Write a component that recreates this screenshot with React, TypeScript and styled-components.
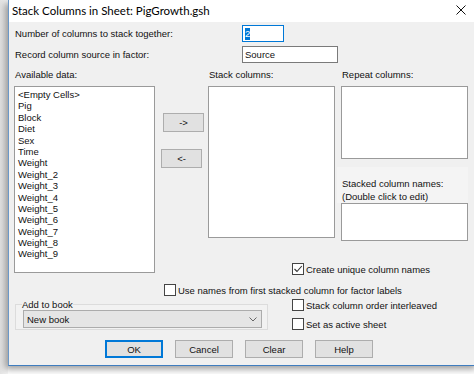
import React from "react";
import styled, { createGlobalStyle } from "styled-components";

const Global = createGlobalStyle`
  html, body { margin: 0; padding: 0; background: #ffffff; overflow: hidden; }
  body { width: 474px; height: 374px; font-family: "Liberation Sans", Arial, sans-serif; }
  #root { width: 474px; height: 374px; overflow: hidden; }
`;

const Page = styled.div`
  width: 474px;
  height: 374px;
  background: linear-gradient(to right, #e4e4e4 0px, #f6f6f6 8px, #ffffff 8px);
  overflow: hidden;
`;

const Frame = styled.div`
  margin-left: 8px;
  width: 470px;
  height: 365px;
  border-left: 1px solid #6b98c8;
  border-bottom: 1px solid #3f7dbf;
  box-shadow: -3px 3px 7px rgba(0, 0, 0, 0.4);
  display: flex;
  flex-direction: column;
  background: #f0f0f0;
`;

const TitleBar = styled.div`
  height: 22px;
  flex: none;
  background: #ffffff;
  display: flex;
  align-items: center;
  justify-content: space-between;
  padding-left: 3px;
`;

const Title = styled.span`
  font-family: Lato, "Noto Sans", sans-serif;
  font-size: 11.5px;
  color: #000;
  margin-top: -2px;
`;

const Close = styled.span`
  width: 20px;
  height: 20px;
  margin-right: 8px;
  margin-top: -2px;
  display: flex;
  align-items: center;
  justify-content: center;
`;

const Body = styled.div`
  flex: 1;
  padding: 3px 0 0 5px;
  display: flex;
  flex-direction: column;
  font-size: 9.5px;
  color: #111;
`;

const FieldRow = styled.div<{ $mt?: number }>`
  display: flex;
  align-items: center;
  height: 17px;
  margin-top: ${(p) => p.$mt ?? 0}px;
`;

const FieldLabel = styled.span`
  width: 227px;
  padding-left: 1px;
`;

const TextInput = styled.div<{ $w: number; $focus?: boolean }>`
  width: ${(p) => p.$w}px;
  height: 17px;
  box-sizing: border-box;
  background: #fff;
  border: 1px solid ${(p) => (p.$focus ? "#0078d7" : "#7a7a7a")};
  display: flex;
  align-items: center;
  padding-left: 2px;
`;

const Sel = styled.span`
  background: #0078d7;
  color: #fff;
  line-height: 12px;
`;

const Main = styled.div`
  display: flex;
  align-items: flex-start;
  margin-top: 6px;
`;

const Col = styled.div<{ $w: number }>`
  width: ${(p) => p.$w}px;
  display: flex;
  flex-direction: column;
`;

const Header = styled.div`
  height: 12px;
  line-height: 12px;
  padding-left: 1px;
  margin-bottom: 5px;
  white-space: nowrap;
`;

const ListBox = styled.div<{ $h: number }>`
  height: ${(p) => p.$h}px;
  box-sizing: border-box;
  background: #fff;
  border: 1px solid #9a9a9a;
  padding: 2px 3px;
`;

const Item = styled.div`
  line-height: 11.4px;
  height: 11.4px;
  white-space: nowrap;
`;

const ButtonCol = styled.div`
  width: 53px;
  display: flex;
  flex-direction: column;
  padding-top: 44px;
`;

const Button = styled.div<{ $w: number; $h?: number; $ml?: number; $mt?: number; $def?: boolean }>`
  width: ${(p) => p.$w}px;
  height: ${(p) => p.$h ?? 19}px;
  margin-left: ${(p) => p.$ml ?? 0}px;
  margin-top: ${(p) => p.$mt ?? 0}px;
  box-sizing: border-box;
  background: #e1e1e1;
  border: 1px solid ${(p) => (p.$def ? "#0078d7" : "#adadad")};
  box-shadow: ${(p) => (p.$def ? "inset 0 0 0 1px #0078d7" : "none")};
  display: flex;
  align-items: center;
  justify-content: center;
  font-size: 9.5px;
`;

const RightArea = styled.div`
  display: flex;
  flex-direction: column;
`;

const RightTop = styled.div`
  display: flex;
  gap: 6px;
`;

const NamesPanel = styled.div`
  margin-top: 8px;
  margin-left: -4px;
  padding: 10px 0 0 5px;
  background: #f4f4f4;
  line-height: 13px;
  height: 26px;
`;

const CheckRow = styled.div<{ $mt?: number; $ml?: number }>`
  display: flex;
  align-items: center;
  gap: 2px;
  margin-top: ${(p) => p.$mt ?? 0}px;
  margin-left: ${(p) => p.$ml ?? 0}px;
  height: 12px;
  white-space: nowrap;
`;

const Box = styled.span`
  width: 12px;
  height: 12px;
  box-sizing: border-box;
  background: #fff;
  border: 1px solid #444;
  display: flex;
  align-items: center;
  justify-content: center;
  flex: none;
`;

const Bottom = styled.div`
  display: flex;
  align-items: flex-start;
  margin-top: 3px;
`;

const Group = styled.fieldset`
  margin: 0 0 0 1px;
  padding: 0 5px 1px 7px;
  width: 253px;
  height: 31px;
  box-sizing: border-box;
  border: 1px solid #dcdcdc;
  background: #f2f2f2;
`;

const Legend = styled.legend`
  padding: 0;
  margin-left: -1px;
  font-size: 9.5px;
  line-height: 11px;
`;

const Select = styled.div`
  height: 18px;
  width: 239px;
  box-sizing: border-box;
  background: #e5e5e5;
  border: 1px solid #acacac;
  display: flex;
  align-items: center;
  justify-content: space-between;
  padding: 0 4px 0 3px;
`;

const RightChecks = styled.div`
  margin-left: 24px;
  display: flex;
  flex-direction: column;
  gap: 7px;
`;

const ButtonRow = styled.div`
  display: flex;
  gap: 12px;
  margin-top: 10px;
  margin-left: 91px;
`;

const Check = ({ checked }: { checked?: boolean }) => (
  <Box>
    {checked && (
      <svg width="10" height="10" viewBox="0 0 10 10">
        <polyline points="1.5,5 4,7.5 8.8,2" fill="none" stroke="#333" strokeWidth="1.1" />
      </svg>
    )}
  </Box>
);

const items = [
  "<Empty Cells>",
  "Pig",
  "Block",
  "Diet",
  "Sex",
  "Time",
  "Weight",
  "Weight_2",
  "Weight_3",
  "Weight_4",
  "Weight_5",
  "Weight_6",
  "Weight_7",
  "Weight_8",
  "Weight_9",
];

export default function App() {
  return (
    <Page>
      <Global />
      <Frame>
        <TitleBar>
          <Title>Stack Columns in Sheet: PigGrowth.gsh</Title>
          <Close>
            <svg width="10" height="10" viewBox="0 0 10 10">
              <path d="M0.5 0.5 L9.5 9.5 M9.5 0.5 L0.5 9.5" stroke="#111" strokeWidth="1" />
            </svg>
          </Close>
        </TitleBar>
        <Body>
          <FieldRow>
            <FieldLabel>Number of columns to stack together:</FieldLabel>
            <TextInput $w={42} $focus>
              <Sel>2</Sel>
            </TextInput>
          </FieldRow>
          <FieldRow $mt={4}>
            <FieldLabel>Record column source in factor:</FieldLabel>
            <TextInput $w={96}>Source</TextInput>
          </FieldRow>
          <Main>
            <Col $w={141}>
              <Header>Available data:</Header>
              <ListBox $h={187}>
                {items.map((t) => (
                  <Item key={t}>{t}</Item>
                ))}
              </ListBox>
            </Col>
            <ButtonCol>
              <Button $w={41} $ml={8}>-&gt;</Button>
              <Button $w={41} $ml={6} $mt={17}>&lt;-</Button>
            </ButtonCol>
            <RightArea>
              <RightTop>
                <Col $w={127}>
                  <Header>Stack columns:</Header>
                  <ListBox $h={152} />
                </Col>
                <Col $w={127}>
                  <Header>Repeat columns:</Header>
                  <ListBox $h={73} />
                  <NamesPanel>
                    Stacked column names:
                    <br />
                    (Double click to edit)
                  </NamesPanel>
                  <ListBox $h={38} />
                </Col>
              </RightTop>
              <CheckRow $mt={22} $ml={84}>
                <Check checked />
                <span>Create unique column names</span>
              </CheckRow>
            </RightArea>
          </Main>
          <CheckRow $mt={9} $ml={150}>
            <Check />
            <span>Use names from first stacked column for factor labels</span>
          </CheckRow>
          <Bottom>
            <Group>
              <Legend>Add to book</Legend>
              <Select>
                <span>New book</span>
                <svg width="8" height="5" viewBox="0 0 8 5">
                  <polyline points="0.5,0.5 4,4 7.5,0.5" fill="none" stroke="#666" strokeWidth="1" />
                </svg>
              </Select>
            </Group>
            <RightChecks>
              <CheckRow>
                <Check />
                <span>Stack column order interleaved</span>
              </CheckRow>
              <CheckRow>
                <Check />
                <span>Set as active sheet</span>
              </CheckRow>
            </RightChecks>
          </Bottom>
          <ButtonRow>
            <Button $w={58} $h={18} $def>OK</Button>
            <Button $w={58} $h={18}>Cancel</Button>
            <Button $w={58} $h={18}>Clear</Button>
            <Button $w={58} $h={18}>Help</Button>
          </ButtonRow>
        </Body>
      </Frame>
    </Page>
  );
}
